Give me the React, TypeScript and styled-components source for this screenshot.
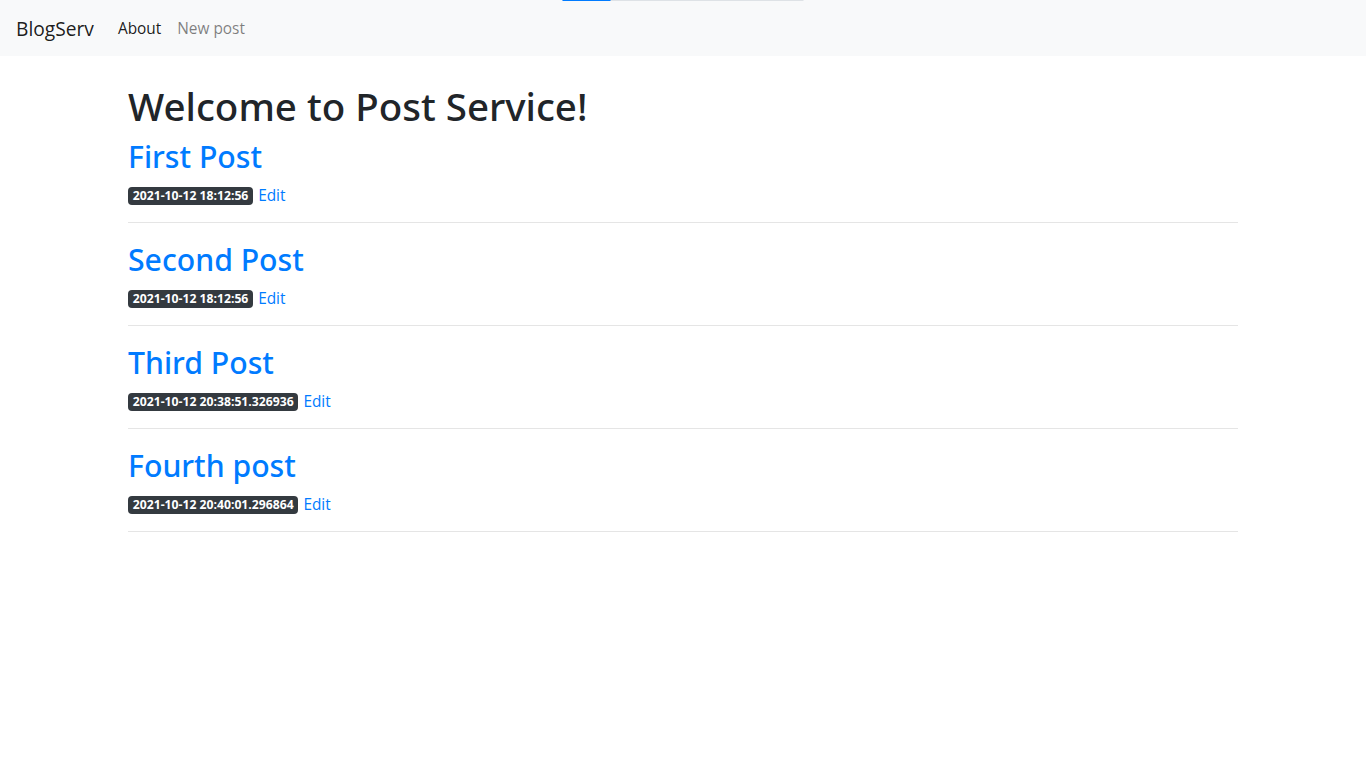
import React from "react";
import styled, { createGlobalStyle } from "styled-components";

const GlobalStyle = createGlobalStyle`
  html, body { margin: 0; padding: 0; background: #fff; }
  body {
    font-family: "Open Sans", "Noto Sans", sans-serif;
    font-size: 15.4px;
    line-height: 24px;
    color: #212529;
  }
  * { box-sizing: border-box; }
`;

const Navbar = styled.nav`
  position: relative;
  height: 56px;
  background: #f8f9fa;
  display: flex;
  align-items: center;
  padding: 9px 16px 7px;
`;

const Progress = styled.div`
  position: absolute;
  top: 0;
  left: 50%;
  transform: translateX(-50%);
  width: 241px;
  height: 1px;
  background: #dee2e6;
  display: flex;
`;

const ProgressFill = styled.div`
  height: 100%;
  background: #007bff;
`;

const Brand = styled.a`
  font-size: 19.2px;
  line-height: 30px;
  color: rgba(0, 0, 0, 0.9);
  margin-right: 16px;
  text-decoration: none;
`;

const NavList = styled.div`
  display: flex;
`;

const NavLink = styled.a<{ $active?: boolean }>`
  padding: 8px;
  color: ${(p) => (p.$active ? "rgba(0,0,0,0.9)" : "rgba(0,0,0,0.5)")};
  text-decoration: none;
`;

const Container = styled.main`
  width: 1110px;
  margin: 24px auto 0;
`;

const Title = styled.h1`
  font-family: "Noto Sans", "Open Sans", sans-serif;
  font-size: 38.5px;
  font-weight: 500;
  line-height: 48px;
  margin: 0 0 8px;
  padding-top: 2px;
  height: 48px;
`;

const PostTitle = styled.h2`
  font-family: "Noto Sans", "Open Sans", sans-serif;
  font-size: 30.2px;
  font-weight: 500;
  line-height: 38px;
  margin: 0 0 8px;
  padding-top: 2px;
  a {
    color: #007bff;
    text-decoration: none;
  }
`;

const Meta = styled.p`
  margin: 0 0 14px;
  height: 24px;
  display: flex;
  align-items: center;
  gap: 5px;
`;

const Badge = styled.span`
  display: inline-block;
  background: #343a40;
  color: #fff;
  font-size: 12.2px;
  font-weight: 700;
  line-height: 1;
  padding: 3px 4.8px;
  border-radius: 4px;
  white-space: nowrap;
`;

const EditLink = styled.a`
  color: #007bff;
  text-decoration: none;
`;

const Divider = styled.hr`
  margin: 0 0 16px;
  border: 0;
  border-top: 1px solid rgba(0, 0, 0, 0.1);
`;

const posts = [
  { title: "First Post", date: "2021-10-12 18:12:56" },
  { title: "Second Post", date: "2021-10-12 18:12:56" },
  { title: "Third Post", date: "2021-10-12 20:38:51.326936" },
  { title: "Fourth post", date: "2021-10-12 20:40:01.296864" },
];

export default function App() {
  return (
    <>
      <GlobalStyle />
      <Navbar>
        <Progress>
          <ProgressFill style={{ width: "20%" }} />
        </Progress>
        <Brand href="#">BlogServ</Brand>
        <NavList>
          <NavLink href="#" $active>
            About
          </NavLink>
          <NavLink href="#">New post</NavLink>
        </NavList>
      </Navbar>
      <Container>
        <Title>Welcome to Post Service!</Title>
        {posts.map((p) => (
          <article key={p.title}>
            <PostTitle>
              <a href="#">{p.title}</a>
            </PostTitle>
            <Meta>
              <Badge>{p.date}</Badge>
              <EditLink href="#">Edit</EditLink>
            </Meta>
            <Divider />
          </article>
        ))}
      </Container>
    </>
  );
}
